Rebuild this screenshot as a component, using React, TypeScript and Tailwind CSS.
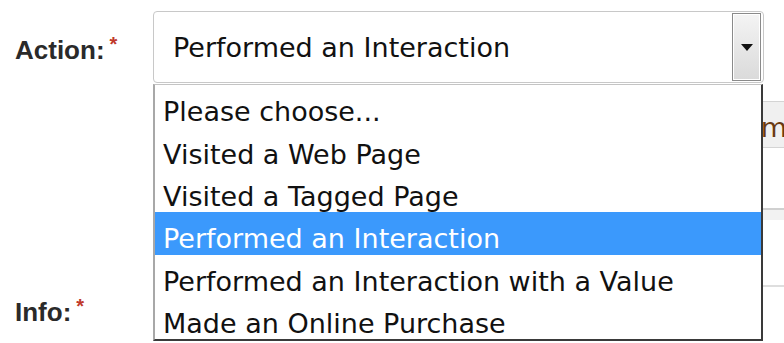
import React from 'react';

const options = [
  'Please choose...',
  'Visited a Web Page',
  'Visited a Tagged Page',
  'Performed an Interaction',
  'Performed an Interaction with a Value',
  'Made an Online Purchase',
];

function Label({ text }: { text: string }) {
  return (
    <div className="w-[153px] pl-[15px] flex items-start font-['Liberation_Sans',Arial,sans-serif] font-bold text-[26px] text-[#2a2a2a]">
      <span>{text}</span>
      <span className="ml-[5px] mt-[-2px] text-[20px] text-[#c0392b]">*</span>
    </div>
  );
}

function App() {
  const selected = 3;
  return (
    <div className="relative w-[784px] h-[343px] overflow-hidden bg-white font-['DejaVu_Sans',Verdana,sans-serif]">
      {/* Action row */}
      <div className="flex pt-[11px]">
        <div className="pt-[20px]">
          <Label text="Action:" />
        </div>
        <div className="w-[611px] h-[72px] flex items-center justify-between rounded-[4px] border border-[#c8c8c8] bg-white pl-[19px] pr-[2px]">
          <span className="text-[27px] text-[#111] pt-[2px]">{options[selected]}</span>
          <div className="w-[29px] h-[68px] flex items-center justify-center border border-[#8a8a8a] bg-gradient-to-b from-[#f4f4f4] to-[#dadada] shadow-[inset_0_0_0_1px_#fff]">
            <svg width="12" height="7" viewBox="0 0 12 7">
              <path d="M0 0 H12 L6 7 Z" fill="#111" />
            </svg>
          </div>
        </div>
      </div>

      {/* content behind the open list */}
      <div className="ml-[153px] mt-[18px] w-[700px]">
        <div className="h-[47px] flex items-center border-t border-b border-[#d4d4d4] bg-[#f0f0f0]">
          <span className="ml-[571px] pt-[8px] text-[27px] text-[#6b3a12]">Name</span>
        </div>
        <div className="h-[60px]" />
        <div className="h-[12px] border-t-2 border-[#d0d0d0] bg-[#f2f2f2]" />
        <div className="h-[67px] border-b-2 border-[#dedede]" />
      </div>
      <div className="flex mt-[6px]">
        <Label text="Info:" />
      </div>

      {/* open dropdown list */}
      <div className="absolute left-[153px] top-[84px] w-[610px] border-t border-t-[#c4c4c4] border-l-2 border-l-[#a8a8a8] border-r-2 border-r-[#3a3a3a] border-b-2 border-b-[#3a3a3a] bg-white">
        {options.map((o, i) => (
          <div
            key={o}
            className={
              i === selected
                ? 'h-[42.4px] flex items-center pl-[8px] pt-[11px] text-[27px] leading-none bg-[#3b99fc] text-white'
                : 'h-[42.4px] flex items-center pl-[8px] pt-[11px] text-[27px] leading-none text-[#111]'
            }
          >
            {o}
          </div>
        ))}
      </div>
    </div>
  );
}

export default App;
